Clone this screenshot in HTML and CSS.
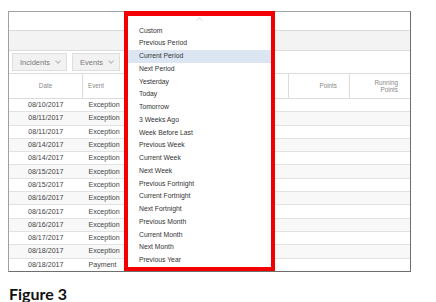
FILE: index.html
```html
<!DOCTYPE html>
<html lang="en">
<head>
    <meta charset="UTF-8">
    <meta name="viewport" content="width=device-width, initial-scale=1.0">
    <title>Figure 3</title>
    <link rel="stylesheet" href="styles.css">
</head>
<body>
    <div class="page">
        <div class="panel">
            <div class="bar-top"></div>
            <div class="bar-gray"></div>

            <!-- Filtres -->
            <div class="filters">
                <button class="filter-btn">Incidents <span class="chev"></span></button>
                <button class="filter-btn">Events <span class="chev"></span></button>
            </div>

            <table class="grid">
                <thead>
                    <tr>
                        <th class="col-date">Date</th>
                        <th class="col-event">Event</th>
                        <th class="col-desc"></th>
                        <th class="col-num">Points</th>
                        <th class="col-num">Running<br>Points</th>
                    </tr>
                </thead>
                <tbody>
                    <tr><td class="c-date">08/10/2017</td><td class="c-event">Exception</td><td></td><td></td><td></td></tr>
                    <tr><td class="c-date">08/11/2017</td><td class="c-event">Exception</td><td></td><td></td><td></td></tr>
                    <tr><td class="c-date">08/11/2017</td><td class="c-event">Exception</td><td></td><td></td><td></td></tr>
                    <tr><td class="c-date">08/14/2017</td><td class="c-event">Exception</td><td></td><td></td><td></td></tr>
                    <tr><td class="c-date">08/14/2017</td><td class="c-event">Exception</td><td></td><td></td><td></td></tr>
                    <tr><td class="c-date">08/15/2017</td><td class="c-event">Exception</td><td></td><td></td><td></td></tr>
                    <tr><td class="c-date">08/15/2017</td><td class="c-event">Exception</td><td></td><td></td><td></td></tr>
                    <tr><td class="c-date">08/16/2017</td><td class="c-event">Exception</td><td></td><td></td><td></td></tr>
                    <tr><td class="c-date">08/16/2017</td><td class="c-event">Exception</td><td></td><td></td><td></td></tr>
                    <tr><td class="c-date">08/16/2017</td><td class="c-event">Exception</td><td></td><td></td><td></td></tr>
                    <tr><td class="c-date">08/17/2017</td><td class="c-event">Exception</td><td></td><td></td><td></td></tr>
                    <tr><td class="c-date">08/18/2017</td><td class="c-event">Exception</td><td></td><td></td><td></td></tr>
                    <tr><td class="c-date">08/18/2017</td><td class="c-event">Payment</td><td></td><td></td><td></td></tr>
                </tbody>
            </table>
        </div>

        <!-- Liste déroulante des périodes -->
        <div class="dropdown">
            <div class="caret"><span></span></div>
            <ul class="period-list">
                <li>Custom</li>
                <li>Previous Period</li>
                <li class="active">Current Period</li>
                <li>Next Period</li>
                <li>Yesterday</li>
                <li>Today</li>
                <li>Tomorrow</li>
                <li>3 Weeks Ago</li>
                <li>Week Before Last</li>
                <li>Previous Week</li>
                <li>Current Week</li>
                <li>Next Week</li>
                <li>Previous Fortnight</li>
                <li>Current Fortnight</li>
                <li>Next Fortnight</li>
                <li>Previous Month</li>
                <li>Current Month</li>
                <li>Next Month</li>
                <li>Previous Year</li>
            </ul>
        </div>

        <p class="caption">Figure 3</p>
    </div>
</body>
</html>
```

FILE: styles.css
```css
/* Style global */
body {
    margin: 0;
    padding: 0;
    background-color: white;
    font-family: "Liberation Sans", Arial, sans-serif;
}

.page {
    position: relative;
    padding: 11px 0 0 8px;
}

.panel {
    width: 401px;
    border: 1px solid #a0a0a0;
    border-right-color: #6e6e6e;
    border-bottom-color: #6e6e6e;
}

.bar-top {
    height: 18px;
    border-bottom: 1px solid #dcdcdc;
}

.bar-gray {
    height: 19px;
    background-color: #f3f3f3;
    border-bottom: 1px solid #dcdcdc;
}

.filters {
    display: flex;
    gap: 5px;
    height: 22px;
    align-items: center;
    padding-left: 3px;
    border-bottom: 1px solid #dcdcdc;
}

.filter-btn {
    display: flex;
    align-items: center;
    gap: 6px;
    height: 18px;
    padding: 0 6px 0 7px;
    border: 1px solid #dedede;
    background-color: #f2f2f2;
    color: #7a7a7a;
    font-family: "Liberation Sans", Arial, sans-serif;
    font-size: 7.5px;
}

.chev {
    width: 3px;
    height: 3px;
    border-right: 1px solid #b5b5b5;
    border-bottom: 1px solid #b5b5b5;
    transform: rotate(45deg);
    margin-top: -2px;
}

/* Tableau */
.grid {
    width: 100%;
    border-collapse: collapse;
    table-layout: fixed;
}

.grid th {
    height: 24px;
    padding: 0;
    font-size: 6.3px;
    font-weight: normal;
    color: #8a8a8a;
    border-right: 1px solid #dcdcdc;
    border-bottom: 1px solid #dcdcdc;
    line-height: 7.5px;
}

.grid th:last-child {
    border-right: none;
}

.col-date {
    width: 73px;
    text-align: center;
}

.col-event {
    width: 54px;
    text-align: left;
    padding-left: 5px !important;
}

.col-num {
    width: 48px;
    text-align: right;
    padding-right: 12px !important;
}

.grid td {
    height: 12.3px;
    padding: 0;
    font-size: 7.1px;
    color: #444;
    border-bottom: 1px solid #e2e2e2;
    white-space: nowrap;
}

.grid tbody tr:nth-child(even) {
    background-color: #f8f8f8;
}

.grid tbody tr:last-child td {
    border-bottom: none;
}

.c-date {
    text-align: center;
}

.c-event {
    padding-left: 6px !important;
}

/* Liste déroulante */
.dropdown {
    position: absolute;
    left: 124px;
    top: 11px;
    width: 143px;
    border: 4px solid #f20000;
    border-top-width: 5px;
    background-color: white;
}

.caret {
    height: 8.65px;
    display: flex;
    justify-content: center;
}

.caret span {
    width: 4px;
    height: 4px;
    margin-top: 2px;
    border-left: 1px solid #e2e2e2;
    border-top: 1px solid #e2e2e2;
    transform: rotate(45deg);
}

.period-list {
    list-style: none;
    margin: 0;
    padding: 0;
}

.period-list li {
    height: 12.75px;
    line-height: 12.75px;
    padding-left: 11px;
    font-size: 6.8px;
    color: #333;
}

.period-list li.active {
    background-color: #dce6f2;
}

.caption {
    margin: 12px 0 0 1px;
    font-family: Lato, "Open Sans", sans-serif;
    font-weight: bold;
    font-size: 16px;
    color: #111;
}
```
